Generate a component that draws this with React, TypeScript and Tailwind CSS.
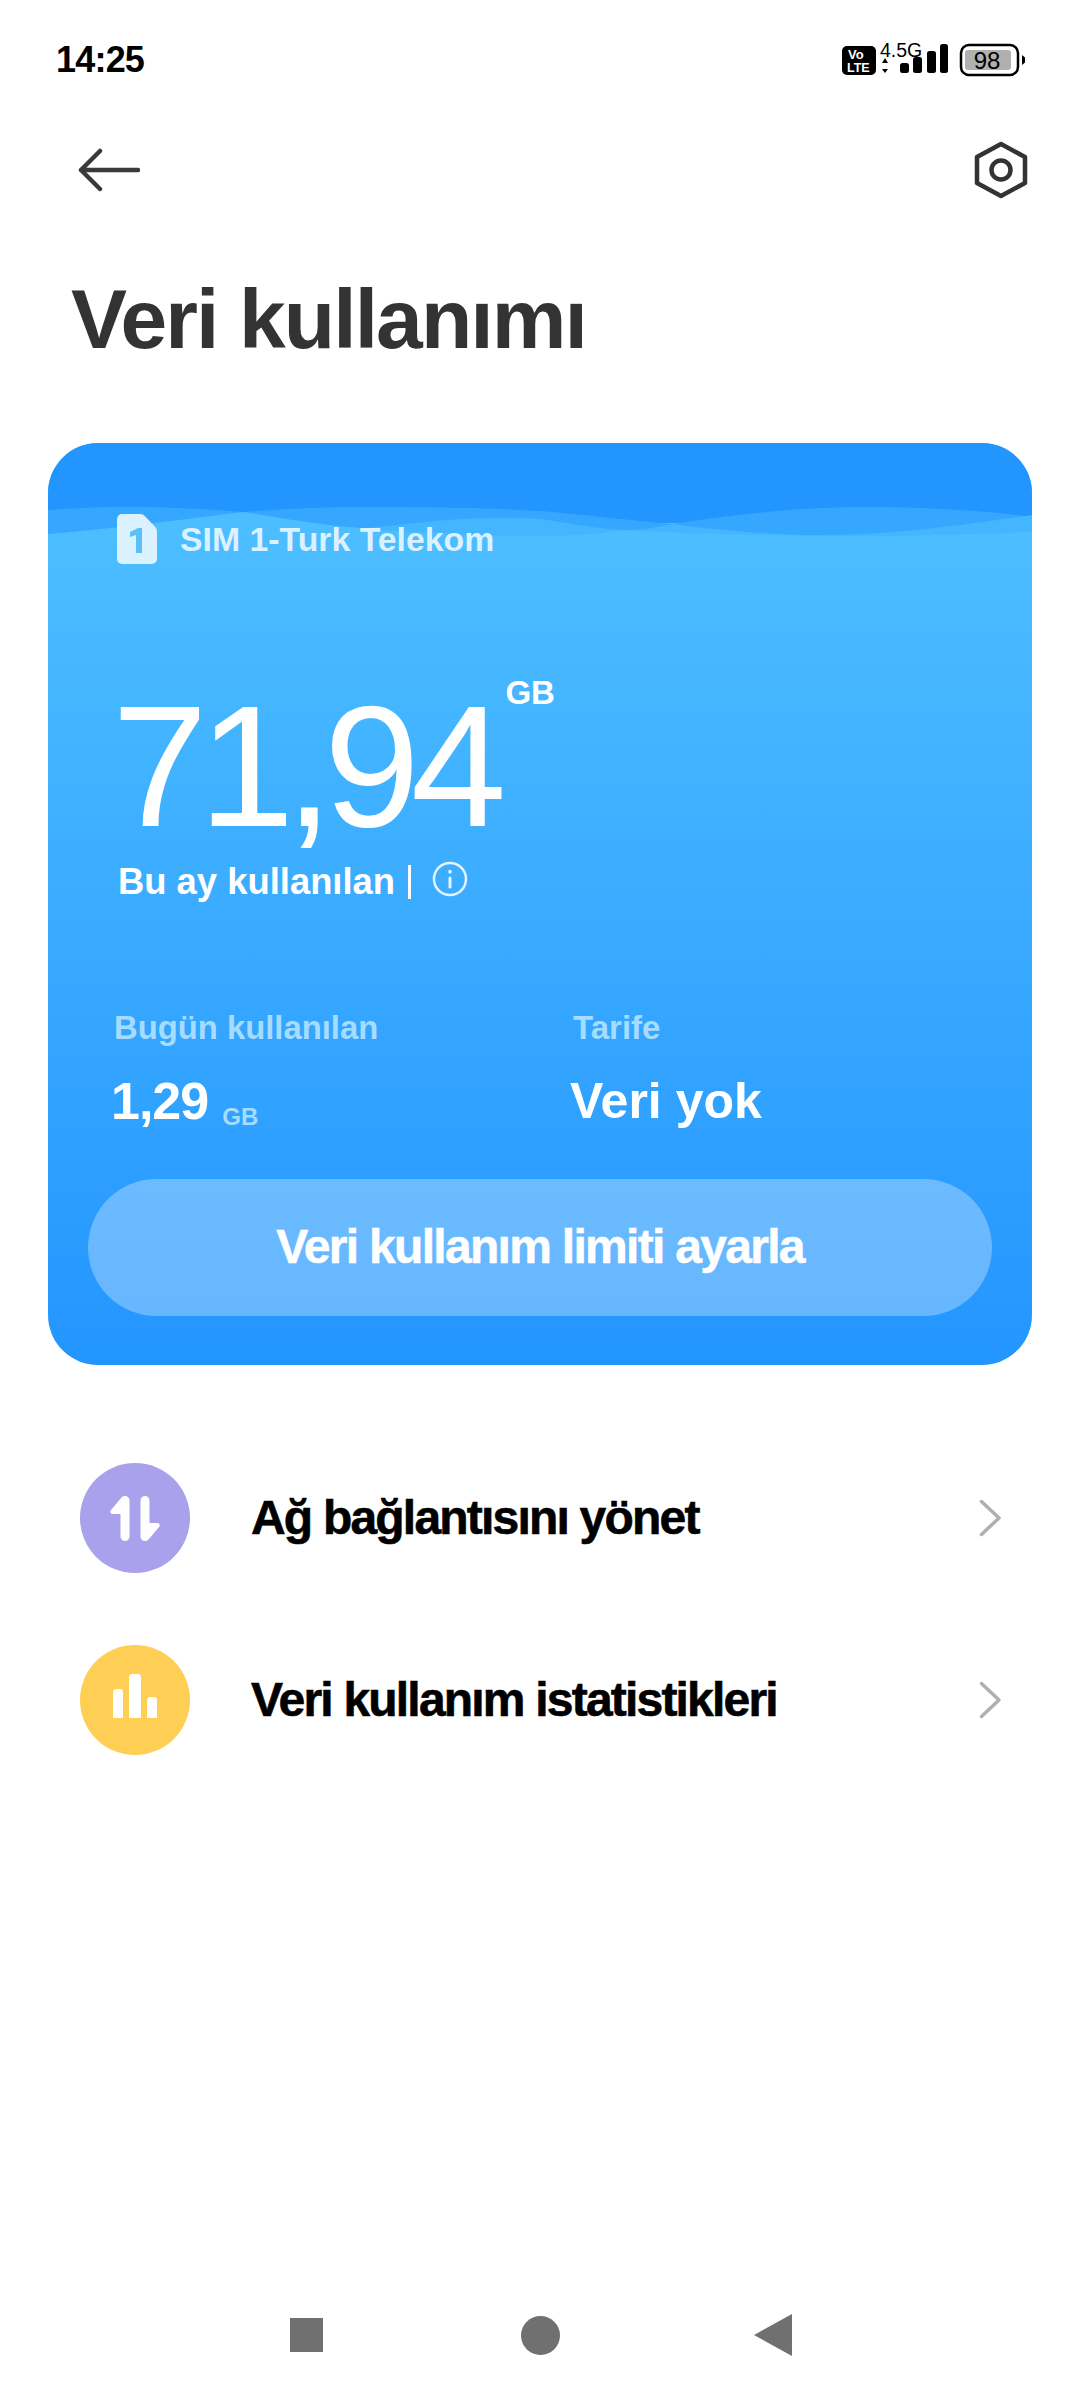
import type { ReactNode } from 'react'

const font = { fontFamily: '"Liberation Sans", Arial, sans-serif' }

function StatusBar() {
  return (
    <div className="flex h-[107px] items-start justify-between pl-[56px] pr-[50px] pt-[42px]">
      <span className="text-[36px] font-bold leading-[36px] tracking-[-0.8px] text-black">14:25</span>
      <svg width="190" height="40" viewBox="0 0 190 40" className="-mt-[2px]">
        <rect x="2" y="6" width="34" height="29" rx="5" fill="#000" />
        <text x="8" y="19" fontSize="13" fontWeight="700" fill="#fff">Vo</text>
        <text x="7" y="32" fontSize="12.500" fontWeight="700" fill="#fff">LTE</text>
        <text x="40" y="17" fontSize="19.500" fill="#000">4.5G</text>
        <path d="M45 18l3 5h-6zM45 33l3-4h-6z" fill="#000" />
        <rect x="60" y="23" width="9" height="10" rx="2.500" fill="#000" />
        <rect x="73" y="17" width="9" height="16" rx="2.500" fill="#000" />
        <rect x="87" y="11" width="9" height="22" rx="2.500" fill="#000" />
        <rect x="100" y="4" width="8" height="29" rx="2.500" fill="#000" />
        <rect x="121" y="5" width="57" height="30" rx="8" fill="none" stroke="#000" strokeWidth="2.500" />
        <rect x="125" y="10" width="46" height="20" rx="3" fill="#b0b0b0" />
        <text x="147" y="29" textAnchor="middle" fontSize="24" fill="#000">98</text>
        <path d="M182 15l3 2.500v5l-3 2.500z" fill="#000" />
      </svg>
    </div>
  )
}

function CardWaves() {
  return (
    <svg className="absolute left-0 top-0" width="984" height="100" viewBox="0 0 984 100">
      <path d="M0 67C30 65 70 63 100 64C140 65 170 67 195 69C235 66 270 64 315 64C390 64 440 65 492 68C540 72 585 78 625 81C680 72 750 64 820 64C880 64 940 68 984 74V100H0Z" fill="#36a7ff" />
      <path d="M320 85C380 78 440 72 492 76C520 80 550 86 578 87C595 87 610 84 625 81C660 86 720 92 775 92C850 92 930 80 984 72V100H320Z" fill="#44b5ff" />
      <path d="M0 91C70 85 130 77 195 69C230 74 265 81 302 84C360 90 430 93 502 93C530 93 555 89 578 87C620 90 700 92 775 93C850 94 930 91 984 89V100H0Z" fill="#4cbdff" />
    </svg>
  )
}

function SimIcon() {
  return (
    <svg width="40" height="50" viewBox="0 0 40 50">
      <path d="M5 0H23C25 0 26.500 .7 28 2.200L37.800 12.500C39.300 14 40 15.500 40 17.500V45a5 5 0 0 1-5 5H5a5 5 0 0 1-5-5V5a5 5 0 0 1 5-5Z" fill="#daf1ff" />
      <path d="M13 18l8-4h4v25h-6V21l-6 2Z" fill="#5cc0f8" />
    </svg>
  )
}

function ArrowsIcon() {
  const arrow = 'M18 6a4.500 4.500 0 0 1 4.500 4.500V46.500a4.500 4.500 0 0 1-9 0V24H5.500c-2 0-3-2.500-1.500-4L14.500 7.500C15.500 6.500 16.800 6 18 6Z'
  return (
    <svg width="56" height="56" viewBox="0 0 56 56" fill="#fff">
      <path d={arrow} />
      <path d={arrow} transform="rotate(180 28 28.500)" />
    </svg>
  )
}

function BarsIcon() {
  return (
    <svg width="60" height="60" viewBox="0 0 60 60" fill="#fff">
      <path d="M8 22a3 3 0 0 1 3-3h4a3 3 0 0 1 3 3v26H8Z" />
      <path d="M24 7a3 3 0 0 1 3-3h6a3 3 0 0 1 3 3v41H24Z" />
      <path d="M42 30a3 3 0 0 1 3-3h4a3 3 0 0 1 3 3v18H42Z" />
    </svg>
  )
}

function MenuRow({ color, label, children }: { color: string; label: string; children: ReactNode }) {
  return (
    <div className="flex h-[110px] items-center pl-[80px] pr-[77px]">
      <div className={`flex h-[110px] w-[110px] shrink-0 items-center justify-center rounded-full ${color}`}>
        {children}
      </div>
      <span className="ml-[61px] flex-1 text-[48px] font-bold leading-none tracking-[-1.8px] text-black [-webkit-text-stroke:0.6px_black]">{label}</span>
      <svg width="24" height="40" viewBox="0 0 24 40" fill="none" stroke="#b0b0b0" strokeWidth="3.500" strokeLinecap="round" strokeLinejoin="round">
        <path d="M2.500 3.500L20 20L2.500 36.500" />
      </svg>
    </div>
  )
}

export default function App() {
  return (
    <div style={font} className="flex h-[2400px] w-[1080px] flex-col overflow-hidden bg-white">
      <StatusBar />

      <div className="flex h-[110px] items-center justify-between pl-[78px] pr-[52px] pt-[16px]">
        <svg width="62" height="44" viewBox="0 0 62 44" fill="none" stroke="#3a3a3a" strokeWidth="4.500" strokeLinecap="round" strokeLinejoin="round">
          <path d="M3 22H60M22 3L3 22L22 41" />
        </svg>
        <svg width="54" height="58" viewBox="0 0 54 58" fill="none" stroke="#333" strokeWidth="4.500" strokeLinejoin="round">
          <path d="M27 3L51 16V42L27 55L3 42V16Z" />
          <circle cx="27" cy="29" r="9.500" />
        </svg>
      </div>

      <h1 className="mt-[52px] pl-[71px] text-[84px] font-bold leading-[100px] tracking-[-1.9px] text-[#333]">Veri kullanımı</h1>

      <div className="relative mx-[48px] mt-[74px] h-[922px] overflow-hidden rounded-[50px] bg-gradient-to-b from-[#4cbdff] from-[11%] to-[#2395ff] to-[100%]">
        <div className="absolute left-0 top-0 h-[80px] w-full bg-[#2395ff]" />
        <CardWaves />
        <div className="relative flex h-full flex-col pl-[69px]">
          <div className="mt-[71px] flex items-center">
            <SimIcon />
            <span className="ml-[23px] text-[33.800px] font-bold text-[#daf1ff]">SIM 1-Turk Telekom</span>
          </div>

          <div className="mt-[121px] flex items-start">
            <span className="-ml-[5px] text-[172px] font-normal leading-[160px] tracking-[-9px] text-white">71,94</span>
            <span className="-mt-[11px] ml-[8px] text-[33px] font-bold leading-[36px] text-white">GB</span>
          </div>

          <div className="mt-[16px] flex h-[40px] items-center text-white">
            <span className="ml-[1px] text-[36.400px] font-bold leading-[40px]">Bu ay kullanılan</span>
            <div className="ml-[13px] h-[34px] w-[3px] bg-white" />
            <svg className="-mt-[6px] ml-[21px]" width="36" height="36" viewBox="0 0 36 36" fill="none" stroke="#e3f4ff" strokeWidth="2.500" strokeLinecap="round">
              <circle cx="18" cy="18" r="16" />
              <path d="M18 17V26" strokeWidth="3" />
              <path d="M18 10.500V11" strokeWidth="3.500" />
            </svg>
          </div>

          <div className="-ml-[3px] mt-[106px] flex">
            <div className="w-[459px]">
              <div className="text-[32.800px] font-bold leading-[40px] text-[#a5dcff]">Bugün kullanılan</div>
              <div className="-ml-[3px] mt-[23px] flex items-baseline text-white">
                <span className="text-[52px] font-bold leading-[60px] tracking-[-1px]">1,29</span>
                <span className="ml-[14px] translate-y-[6px] text-[24px] font-bold text-[#a5dcff]">GB</span>
              </div>
            </div>
            <div>
              <div className="text-[33px] font-bold leading-[40px] text-[#a5dcff]">Tarife</div>
              <div className="-ml-[3px] mt-[23px] text-[50px] font-bold leading-[60px] text-white">Veri yok</div>
            </div>
          </div>

          <div className="-ml-[29px] mt-[48px] flex h-[137px] w-[904px] items-center justify-center rounded-full bg-white/30 text-[48px] font-bold tracking-[-1.7px] text-white [-webkit-text-stroke:0.5px_white]">
            Veri kullanım limiti ayarla
          </div>
        </div>
      </div>

      <div className="mt-[98px] flex flex-col gap-[72px]">
        <MenuRow color="bg-[#a9a1ec]" label="Ağ bağlantısını yönet">
          <ArrowsIcon />
        </MenuRow>
        <MenuRow color="bg-[#ffce55]" label="Veri kullanım istatistikleri">
          <BarsIcon />
        </MenuRow>
      </div>

      <div className="mb-[43px] mt-auto flex h-[44px] items-center pl-[290px]">
        <div className="h-[34px] w-[33px] bg-[#707070]" />
        <div className="ml-[198px] h-[39px] w-[39px] rounded-full bg-[#707070]" />
        <svg className="ml-[194px]" width="38" height="42" viewBox="0 0 38 42" fill="#707070">
          <path d="M38 0V42L0 21Z" />
        </svg>
      </div>
    </div>
  )
}
